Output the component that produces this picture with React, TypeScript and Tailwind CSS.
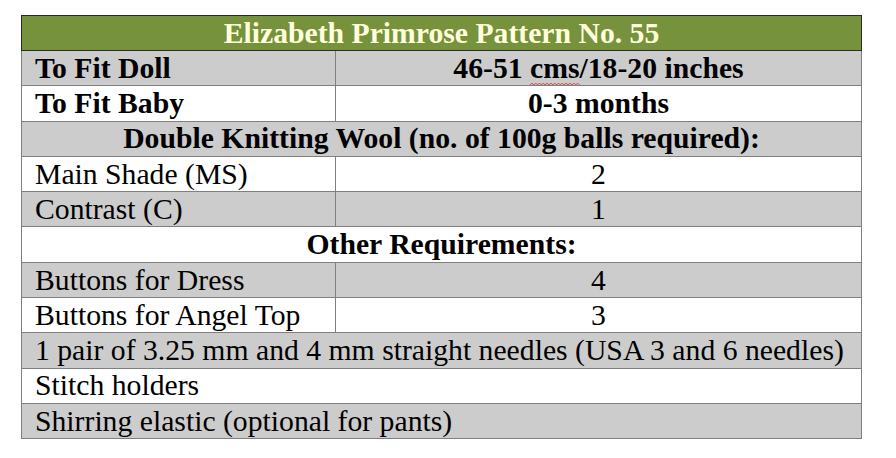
import React from 'react';

type Row =
  | { kind: 'pair'; label: string; value: React.ReactNode; bold?: boolean; shade: boolean }
  | { kind: 'full'; text: string; bold?: boolean; center?: boolean; shade: boolean };

// red spell-check squiggle under a word
const Squiggle = ({ children }: { children: React.ReactNode }) => (
  <span className="relative inline-block">
    {children}
    <svg className="absolute left-0 top-[30px] h-[4px] w-full" viewBox="0 0 52 4" preserveAspectRatio="none">
      <path
        d="M0 3 L2 1 L4 3 L6 1 L8 3 L10 1 L12 3 L14 1 L16 3 L18 1 L20 3 L22 1 L24 3 L26 1 L28 3 L30 1 L32 3 L34 1 L36 3 L38 1 L40 3 L42 1 L44 3 L46 1 L48 3 L50 1 L52 3"
        fill="none"
        stroke="#d23c3c"
        strokeWidth="0.9"
      />
    </svg>
  </span>
);

const rows: Row[] = [
  {
    kind: 'pair',
    label: 'To Fit Doll',
    bold: true,
    shade: true,
    value: (
      <>
        46-51 <Squiggle>cms</Squiggle>/18-20 inches
      </>
    ),
  },
  { kind: 'pair', label: 'To Fit Baby', value: '0-3 months', bold: true, shade: false },
  { kind: 'full', text: 'Double Knitting Wool (no. of 100g balls required):', bold: true, center: true, shade: true },
  { kind: 'pair', label: 'Main Shade (MS)', value: '2', shade: false },
  { kind: 'pair', label: 'Contrast (C)', value: '1', shade: true },
  { kind: 'full', text: 'Other Requirements:', bold: true, center: true, shade: false },
  { kind: 'pair', label: 'Buttons for Dress', value: '4', shade: true },
  { kind: 'pair', label: 'Buttons for Angel Top', value: '3', shade: false },
  { kind: 'full', text: '1 pair of 3.25 mm and 4 mm straight needles (USA 3 and 6 needles)', shade: true },
  { kind: 'full', text: 'Stitch holders', shade: false },
  { kind: 'full', text: 'Shirring elastic (optional for pants)', shade: true },
];

export default function App() {
  return (
    <div
      className="min-h-[458px] w-[896px] bg-white pl-[21px] pt-[15px]"
      style={{ fontFamily: '"Liberation Serif", "Times New Roman", serif' }}
    >
      <table className="w-[841px] table-fixed border-collapse text-[29.7px] leading-[1.1] text-black">
        <colgroup>
          <col className="w-[314px]" />
          <col />
        </colgroup>
        <tbody>
          <tr className="h-[35px] bg-[#76923c]">
            <td colSpan={2} className="border border-[#2a2a2a] p-0 text-center font-bold text-[#ffffdc]">
              Elizabeth Primrose Pattern No. 55
            </td>
          </tr>
          {rows.map((r, i) => {
            const bg = r.shade ? 'bg-[#cccccc]' : 'bg-white';
            const weight = r.bold ? 'font-bold' : 'font-normal';
            if (r.kind === 'full') {
              return (
                <tr key={i} className={`h-[35.3px] ${bg}`}>
                  <td
                    colSpan={2}
                    className={`border border-[#7f7f7f] p-0 ${weight} ${r.center ? 'text-center' : 'pl-[13px] text-left'}`}
                  >
                    {r.text}
                  </td>
                </tr>
              );
            }
            return (
              <tr key={i} className={`h-[35.3px] ${bg}`}>
                <td className={`border border-[#7f7f7f] p-0 pl-[13px] ${weight}`}>{r.label}</td>
                <td className={`border border-[#7f7f7f] p-0 text-center ${weight}`}>{r.value}</td>
              </tr>
            );
          })}
        </tbody>
      </table>
    </div>
  );
}
